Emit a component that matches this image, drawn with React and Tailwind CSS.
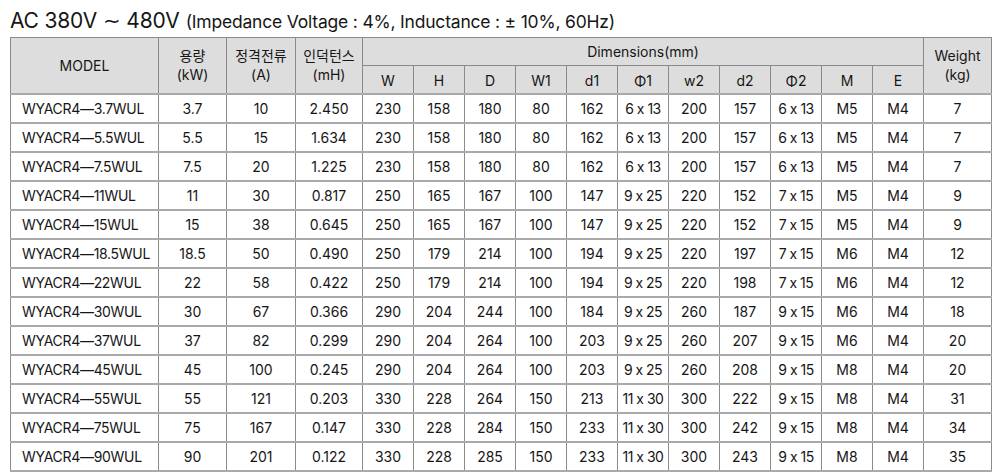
import React from 'react';

const rows = [
  ['WYACR4—3.7WUL', '3.7', '10', '2.450', '230', '158', '180', '80', '162', '6 x 13', '200', '157', '6 x 13', 'M5', 'M4', '7'],
  ['WYACR4—5.5WUL', '5.5', '15', '1.634', '230', '158', '180', '80', '162', '6 x 13', '200', '157', '6 x 13', 'M5', 'M4', '7'],
  ['WYACR4—7.5WUL', '7.5', '20', '1.225', '230', '158', '180', '80', '162', '6 x 13', '200', '157', '6 x 13', 'M5', 'M4', '7'],
  ['WYACR4—11WUL', '11', '30', '0.817', '250', '165', '167', '100', '147', '9 x 25', '220', '152', '7 x 15', 'M5', 'M4', '9'],
  ['WYACR4—15WUL', '15', '38', '0.645', '250', '165', '167', '100', '147', '9 x 25', '220', '152', '7 x 15', 'M5', 'M4', '9'],
  ['WYACR4—18.5WUL', '18.5', '50', '0.490', '250', '179', '214', '100', '194', '9 x 25', '220', '197', '7 x 15', 'M6', 'M4', '12'],
  ['WYACR4—22WUL', '22', '58', '0.422', '250', '179', '214', '100', '194', '9 x 25', '220', '198', '7 x 15', 'M6', 'M4', '12'],
  ['WYACR4—30WUL', '30', '67', '0.366', '290', '204', '244', '100', '184', '9 x 25', '260', '187', '9 x 15', 'M6', 'M4', '18'],
  ['WYACR4—37WUL', '37', '82', '0.299', '290', '204', '264', '100', '203', '9 x 25', '260', '207', '9 x 15', 'M6', 'M4', '20'],
  ['WYACR4—45WUL', '45', '100', '0.245', '290', '204', '264', '100', '203', '9 x 25', '260', '208', '9 x 15', 'M8', 'M4', '20'],
  ['WYACR4—55WUL', '55', '121', '0.203', '330', '228', '264', '150', '213', '11 x 30', '300', '222', '9 x 15', 'M8', 'M4', '31'],
  ['WYACR4—75WUL', '75', '167', '0.147', '330', '228', '284', '150', '233', '11 x 30', '300', '242', '9 x 15', 'M8', 'M4', '34'],
  ['WYACR4—90WUL', '90', '201', '0.122', '330', '228', '285', '150', '233', '11 x 30', '300', '243', '9 x 15', 'M8', 'M4', '35'],
];

const dims = ['W', 'H', 'D', 'W1', 'd1', 'Φ1', 'w2', 'd2', 'Φ2', 'M', 'E'];

export default function App() {
  return (
    <div
      className="w-[1003px] h-[475px] bg-white text-[#161616] px-[10px] pt-[5px]"
      style={{ fontFamily: 'Inter, "Noto Sans CJK KR", sans-serif' }}
    >
      {/* title */}
      <div className="h-[32px] flex items-baseline whitespace-nowrap">
        <span className="text-[21px] tracking-[-0.2px]">AC 380V ∼ 480V</span>
        <span className="text-[17.5px] ml-[6px] tracking-[-0.2px]">(Impedance Voltage : 4%, Inductance : ± 10%, 60Hz)</span>
      </div>

      <table className="table-fixed border-collapse w-[981px] text-[14px] text-center border border-[#7a7a7a]">
        <colgroup>
          <col className="w-[148px]" />
          <col className="w-[68px]" />
          <col className="w-[69px]" />
          <col className="w-[67px]" />
          {dims.map((d) => (
            <col key={d} className="w-[51px]" />
          ))}
          <col className="w-[68px]" />
        </colgroup>
        <thead className="bg-[#dddddd]">
          <tr className="h-[28px]">
            <th rowSpan={2} className="font-normal border border-[#8a8a8a]">MODEL</th>
            <th rowSpan={2} className="font-normal leading-[19px] border border-[#8a8a8a]">용량<br />(kW)</th>
            <th rowSpan={2} className="font-normal leading-[19px] border border-[#8a8a8a]">정격전류<br />(A)</th>
            <th rowSpan={2} className="font-normal leading-[19px] border border-[#8a8a8a]">인덕턴스<br />(mH)</th>
            <th colSpan={11} className="font-normal border border-[#8a8a8a]">Dimensions(mm)</th>
            <th rowSpan={2} className="font-normal leading-[19px] border border-[#8a8a8a]">Weight<br />(kg)</th>
          </tr>
          <tr className="h-[28px]">
            {dims.map((d) => (
              <th key={d} className="font-normal border border-[#8a8a8a] pt-[3px]">{d}</th>
            ))}
          </tr>
        </thead>
        <tbody>
          {rows.map((r) => (
            <tr key={r[0]} className="h-[29px]">
              {r.map((c, i) => (
                <td
                  key={i}
                  className={
                    'border-x border-x-[#8a8a8a] border-y-2 border-y-[#a9a9a9] whitespace-nowrap ' +
                    (i === 0 ? 'text-left pl-[11px] tracking-[-0.3px]' : '') +
                    (i === 9 || i === 12 ? ' tracking-[-0.5px]' : '')
                  }
                >
                  {c}
                </td>
              ))}
            </tr>
          ))}
        </tbody>
      </table>
    </div>
  );
}
